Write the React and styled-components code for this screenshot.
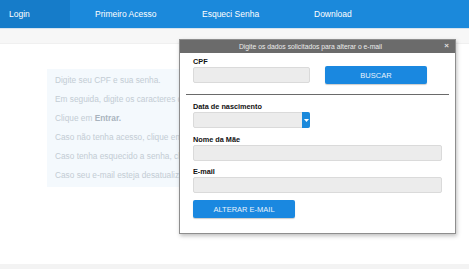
import React from 'react'
import styled, { createGlobalStyle } from 'styled-components'

const Global = createGlobalStyle`
    html, body { margin: 0; padding: 0; background: #fff; }
    body { font-family: "Liberation Sans", Arial, sans-serif; }
    * { box-sizing: border-box; }
`

const Page = styled.div`
    width: 469px;
    height: 269px;
    position: relative;
    overflow: hidden;
    display: flex;
    flex-direction: column;
    background: #fff;
`
const Nav = styled.div`
    height: 29px;
    display: flex;
    background: #1b89db;
    border-bottom: 1px solid #d6e3ee;
`
const NavItem = styled.div`
    width: ${props => props.w}px;
    padding-left: ${props => props.pl}px;
    display: flex;
    align-items: center;
    color: #fff;
    font-size: 8.5px;
    background: ${props => props.active ? '#167cc9' : 'transparent'};
`
const Strip = styled.div`
    height: 15px;
    background: #f7f7f7;
    border-bottom: 1px solid #f0f0f0;
`
const Body = styled.div`
    flex: 1;
    padding: 25px 0 0 47px;
`
const InfoBox = styled.div`
    width: 260px;
    background: #f4f9fd;
    padding: 6px 0 6px 8px;
    display: flex;
    flex-direction: column;
    gap: 8px;
`
const InfoLine = styled.div`
    font-size: 8.3px;
    line-height: 11px;
    color: #c3ccd4;
    white-space: nowrap;
    b { color: #a9b4be; }
`
const Footer = styled.div`
    height: 5px;
    background: #f3f3f3;
`
const Modal = styled.div`
    position: absolute;
    left: 179px;
    top: 39px;
    width: 277px;
    height: 195px;
    background: #fff;
    border: 1px solid #8e8e8e;
    box-shadow: 1px 2px 4px rgba(0,0,0,0.25);
    display: flex;
    flex-direction: column;
`
const ModalHead = styled.div`
    height: 13px;
    background: #6b6b6b;
    color: #ececec;
    font-size: 6.8px;
    display: flex;
    align-items: center;
    justify-content: center;
    padding-right: 14px;
    position: relative;
`
const Close = styled.span`
    position: absolute;
    right: 6px;
    top: 1px;
    font-size: 8px;
    font-weight: bold;
    color: #e0e0e0;
`
const ModalBody = styled.div`
    padding: 4px 13px 0 13px;
    display: flex;
    flex-direction: column;
`
const Row = styled.div`
    display: flex;
    align-items: flex-end;
    gap: 15px;
`
const Field = styled.div`
    display: flex;
    flex-direction: column;
    margin-top: ${props => props.mt || 0}px;
`
const Label = styled.div`
    font-size: 7.3px;
    font-weight: bold;
    color: #111;
    line-height: 10px;
`
const Input = styled.div`
    width: ${props => props.w}px;
    height: 16px;
    background: #ececec;
    border: 1px solid #dadada;
    border-radius: 2px;
    position: relative;
`
const SelectArrow = styled.div`
    position: absolute;
    right: -1px;
    top: -1px;
    bottom: -1px;
    width: 8px;
    background: #1b89db;
    border-radius: 0 2px 2px 0;
    display: flex;
    align-items: center;
    justify-content: center;
`
const Button = styled.div`
    width: 102px;
    height: 18px;
    background: #1a88e0;
    color: #e8f2fc;
    font-size: 7.5px;
    display: flex;
    align-items: center;
    justify-content: center;
    border-radius: 2px;
    box-shadow: 0 1px 1px rgba(0,0,0,0.2);
    margin-bottom: ${props => props.mb || 0}px;
    margin-top: ${props => props.mt || 0}px;
`
const Divider = styled.div`
    height: 1px;
    background: #6a6a6a;
    margin: 11px -7px 0 -7px;
`

const App = () => {
    return (
        <Page>
            <Global />
            <Nav>
                <NavItem w={70} pl={9} active>Login</NavItem>
                <NavItem w={106} pl={25}>Primeiro Acesso</NavItem>
                <NavItem w={113} pl={26}>Esqueci Senha</NavItem>
                <NavItem w={120} pl={25}>Download</NavItem>
            </Nav>
            <Strip />
            <Body>
                <InfoBox>
                    <InfoLine>Digite seu CPF e sua senha.</InfoLine>
                    <InfoLine>Em seguida, digite os caracteres da imagem.</InfoLine>
                    <InfoLine>Clique em <b>Entrar.</b></InfoLine>
                    <InfoLine>Caso não tenha acesso, clique em Primeiro Acesso.</InfoLine>
                    <InfoLine>Caso tenha esquecido a senha, clique em Esqueci Senha.</InfoLine>
                    <InfoLine>Caso seu e-mail esteja desatualizado, clique aqui.</InfoLine>
                </InfoBox>
            </Body>
            <Footer />
            <Modal>
                <ModalHead>
                    Digite os dados solicitados para alterar o e-mail
                    <Close>×</Close>
                </ModalHead>
                <ModalBody>
                    <Row>
                        <Field>
                            <Label>CPF</Label>
                            <Input w={117} />
                        </Field>
                        <Button mb={-1}>BUSCAR</Button>
                    </Row>
                    <Divider />
                    <Field mt={7}>
                        <Label>Data de nascimento</Label>
                        <Input w={117}>
                            <SelectArrow>
                                <svg width="5" height="3" viewBox="0 0 5 3">
                                    <path d="M0 0 L5 0 L2.5 3 Z" fill="#fff" />
                                </svg>
                            </SelectArrow>
                        </Input>
                    </Field>
                    <Field mt={7}>
                        <Label>Nome da Mãe</Label>
                        <Input w={249} />
                    </Field>
                    <Field mt={6}>
                        <Label>E-mail</Label>
                        <Input w={249} />
                    </Field>
                    <Button mt={7}>ALTERAR E-MAIL</Button>
                </ModalBody>
            </Modal>
        </Page>
    )
}

export default App
